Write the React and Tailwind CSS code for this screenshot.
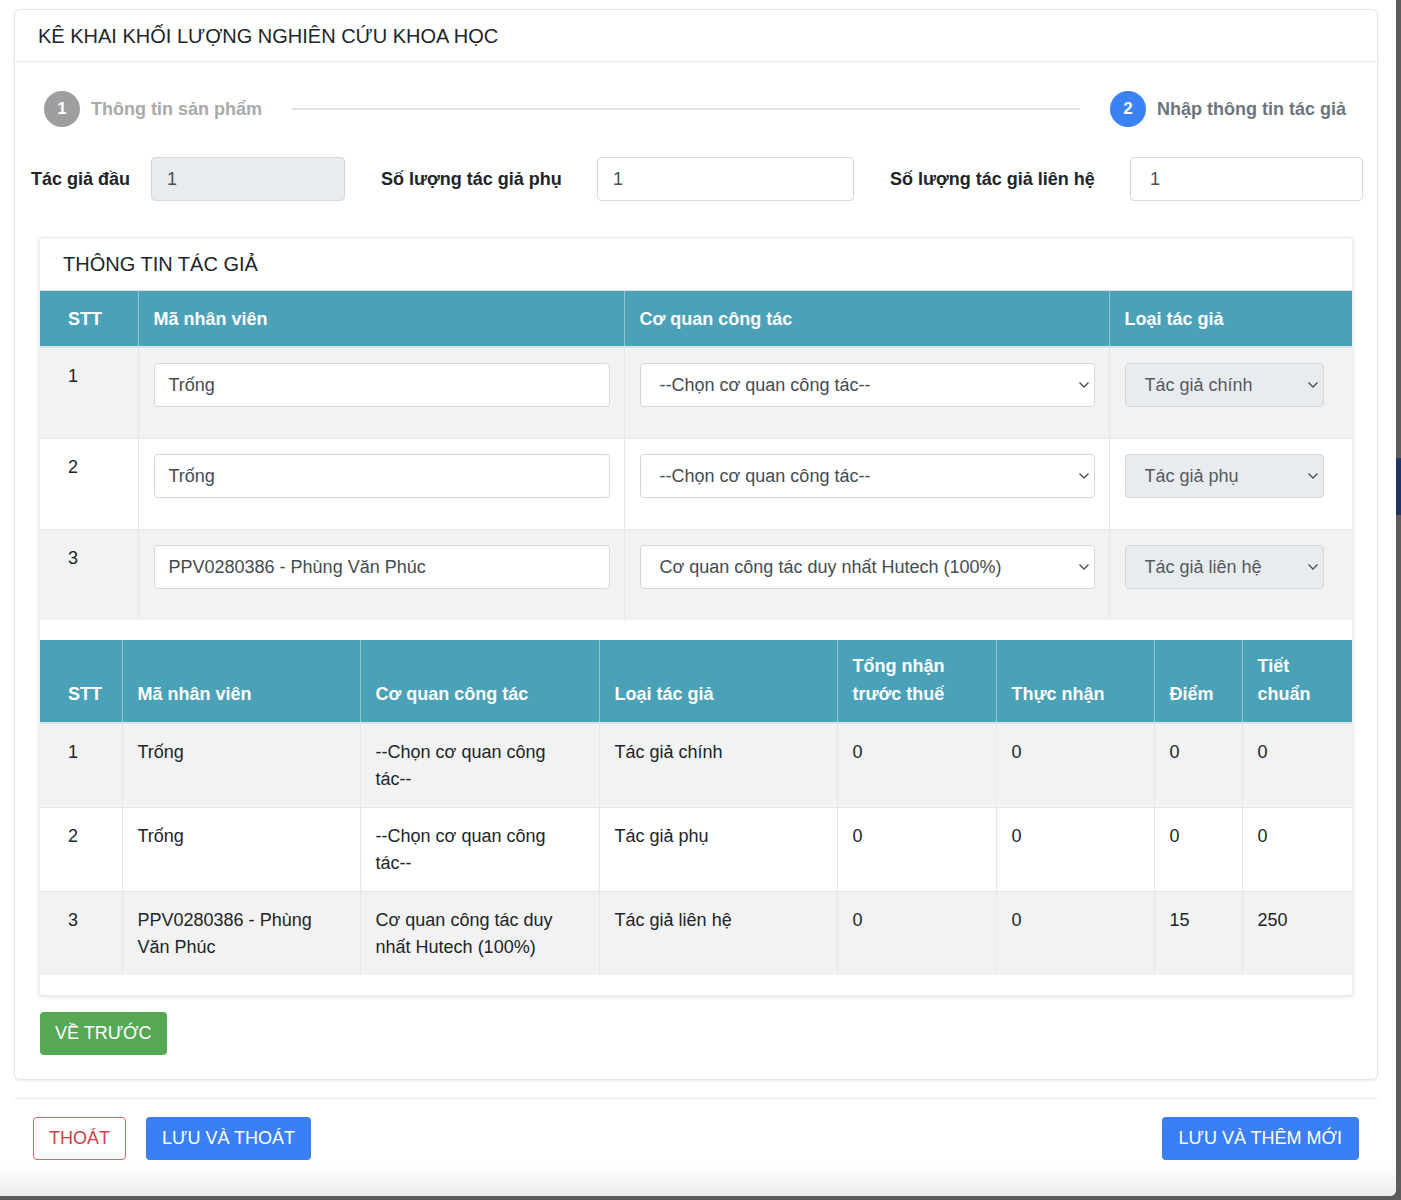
import React from "react";

const authors = [
  {
    stt: 1,
    ma: "Trống",
    coQuan: "--Chọn cơ quan công tác--",
    loai: "Tác giả chính",
    tong: "0",
    thuc: "0",
    diem: "0",
    tiet: "0",
  },
  {
    stt: 2,
    ma: "Trống",
    coQuan: "--Chọn cơ quan công tác--",
    loai: "Tác giả phụ",
    tong: "0",
    thuc: "0",
    diem: "0",
    tiet: "0",
  },
  {
    stt: 3,
    ma: "PPV0280386 - Phùng Văn Phúc",
    coQuan: "Cơ quan công tác duy nhất Hutech (100%)",
    loai: "Tác giả liên hệ",
    tong: "0",
    thuc: "0",
    diem: "15",
    tiet: "250",
  },
];

function Chevron() {
  return (
    <svg width="12" height="8" viewBox="0 0 12 8" fill="none" stroke="#4a4a4a" strokeWidth="1.3">
      <path d="M1.5 1.5l4.5 4.5 4.5-4.5" />
    </svg>
  );
}

// keep words like "tác--" whole when the cell wraps
function Words({ text }) {
  const parts = text.split(" ");
  return parts.map((w, i) => (
    <React.Fragment key={i}>
      <span className="whitespace-nowrap">{w}</span>
      {i < parts.length - 1 ? " " : ""}
    </React.Fragment>
  ));
}

function FakeSelect({ value, disabled }) {
  return (
    <div
      className={`h-[44px] flex items-center justify-between rounded-[4px] border border-[#d4d8dc] pl-[19px] pr-[4px] text-[18px] ${
        disabled ? "bg-[#e9ecef] text-[#555a5f]" : "bg-white text-[#444b52]"
      }`}
    >
      <span className="truncate">{value}</span>
      <Chevron />
    </div>
  );
}

function Step({ num, label, active }) {
  return (
    <div className="flex items-center gap-[11px] shrink-0">
      <div
        className={`w-[36px] h-[36px] rounded-full flex items-center justify-center text-white font-bold text-[17px] ${
          active ? "bg-[#3b82f6]" : "bg-[#9e9e9e]"
        }`}
      >
        {num}
      </div>
      <span className={`font-bold text-[18px] ${active ? "text-[#6c757d]" : "text-[#a9a9a9]"}`}>{label}</span>
    </div>
  );
}

export default function App() {
  const th = "text-left font-bold text-white text-[18px] leading-[28px]";
  return (
    <div
      className="w-[1401px] h-[1200px] bg-[#5c5c5c] flex text-[#212529]"
      style={{ fontFamily: '"Liberation Sans", Arial, sans-serif' }}
    >
      <div className="w-[1396px] h-[1196px] bg-white rounded-br-[6px] flex flex-col">
        {/* Main card */}
        <div className="mt-[9px] ml-[14px] mr-[18px] border border-[#e4e4e4] rounded-[6px] shadow-[0_1px_3px_rgba(0,0,0,0.08)] bg-white">
          <div className="h-[52px] flex items-center px-[23px] border-b border-[#ececec] text-[20px]">
            KÊ KHAI KHỐI LƯỢNG NGHIÊN CỨU KHOA HỌC
          </div>

          {/* Stepper */}
          <div className="flex items-center mt-[29px] pl-[29px] pr-[31px]">
            <Step num="1" label="Thông tin sản phẩm" />
            <div className="flex-1 h-[2px] bg-[#e2e2e2] mx-[30px]" />
            <Step num="2" label="Nhập thông tin tác giả" active />
          </div>

          {/* Counts */}
          <div className="flex items-center mt-[30px] pl-[16px]">
            <div className="flex items-center">
              <span className="w-[120px] font-bold text-[18px]">Tác giả đầu</span>
              <div className="w-[194px] h-[44px] rounded-[4px] border border-[#d4d8dc] bg-[#e9ecef] flex items-center pl-[15px] text-[18px] text-[#495057]">
                1
              </div>
            </div>
            <div className="flex items-center ml-[36px]">
              <span className="w-[216px] font-bold text-[18px]">Số lượng tác giả phụ</span>
              <div className="w-[257px] h-[44px] rounded-[4px] border border-[#d4d8dc] bg-white flex items-center pl-[15px] text-[18px] text-[#495057]">
                1
              </div>
            </div>
            <div className="flex items-center ml-[36px]">
              <span className="w-[240px] font-bold text-[18px]">Số lượng tác giả liên hệ</span>
              <div className="w-[233px] h-[44px] rounded-[4px] border border-[#d4d8dc] bg-white flex items-center pl-[19px] text-[18px] text-[#495057]">
                1
              </div>
            </div>
          </div>

          {/* Author card */}
          <div className="mt-[36px] mx-[24px] rounded-[4px] border border-[#ececec] shadow-[0_1px_4px_rgba(0,0,0,0.12)] bg-white pb-[20px]">
            <div className="h-[53px] flex items-center pl-[23px] text-[20px] border-b border-[#e0e0e0]">
              THÔNG TIN TÁC GIẢ
            </div>

            <table className="w-full table-fixed">
              <colgroup>
                <col className="w-[98px]" />
                <col className="w-[486px]" />
                <col className="w-[485px]" />
                <col />
              </colgroup>
              <thead>
                <tr className="bg-[#4ba1b7] border-b-2 border-[#dee2e6]">
                  <th className={`${th} pt-[14px] pb-[13px] pl-[28px]`}>STT</th>
                  <th className={`${th} pt-[14px] pb-[13px] pl-[15px] border-l border-[#8fc5d3]`}>Mã nhân viên</th>
                  <th className={`${th} pt-[14px] pb-[13px] pl-[15px] border-l border-[#8fc5d3]`}>Cơ quan công tác</th>
                  <th className={`${th} pt-[14px] pb-[13px] pl-[15px] border-l border-[#8fc5d3]`}>Loại tác giả</th>
                </tr>
              </thead>
              <tbody>
                {authors.map((a, i) => (
                  <tr
                    key={a.stt}
                    className={`${i % 2 === 0 ? "bg-[#f2f2f2]" : "bg-white"} ${i > 0 ? "border-t border-[#e4e4e4]" : ""}`}
                  >
                    <td className="align-top pt-[16px] pl-[28px] text-[18px] leading-[24px]">{a.stt}</td>
                    <td className="align-top pt-[15px] pb-[31px] pl-[15px] pr-[14px] border-l border-[#e8e8e8]">
                      <div className="h-[44px] rounded-[4px] border border-[#d4d8dc] bg-white flex items-center pl-[14px] text-[18px] text-[#444b52]">
                        {a.ma}
                      </div>
                    </td>
                    <td className="align-top pt-[15px] pl-[15px] pr-[14px] border-l border-[#e8e8e8]">
                      <FakeSelect value={a.coQuan} />
                    </td>
                    <td className="align-top pt-[15px] pl-[15px] pr-[28px] border-l border-[#e8e8e8]">
                      <FakeSelect value={a.loai} disabled />
                    </td>
                  </tr>
                ))}
              </tbody>
            </table>

            <div className="h-[20px]" />

            <table className="w-full table-fixed">
              <colgroup>
                <col className="w-[82px]" />
                <col className="w-[238px]" />
                <col className="w-[239px]" />
                <col className="w-[238px]" />
                <col className="w-[159px]" />
                <col className="w-[158px]" />
                <col className="w-[88px]" />
                <col />
              </colgroup>
              <thead>
                <tr className="bg-[#4ba1b7] border-b-2 border-[#dee2e6]">
                  <th className={`${th} align-bottom pt-[12px] pb-[14px] pl-[28px]`}>STT</th>
                  {["Mã nhân viên", "Cơ quan công tác", "Loại tác giả", "Tổng nhận trước thuế", "Thực nhận", "Điểm", "Tiết chuẩn"].map(
                    (h) => (
                      <th key={h} className={`${th} align-bottom pt-[12px] pb-[14px] pl-[15px] pr-[12px] border-l border-[#8fc5d3]`}>
                        {h}
                      </th>
                    )
                  )}
                </tr>
              </thead>
              <tbody>
                {authors.map((a, i) => (
                  <tr
                    key={a.stt}
                    className={`${i % 2 === 0 ? "bg-[#f2f2f2]" : "bg-white"} ${i > 0 ? "border-t border-[#e4e4e4]" : ""} text-[18px] leading-[27px]`}
                  >
                    <td className="align-top pt-[15px] pb-[14px] pl-[28px]">{a.stt}</td>
                    {[a.ma, a.coQuan, a.loai, a.tong, a.thuc, a.diem, a.tiet].map((v, j) => (
                      <td key={j} className="align-top pt-[15px] pb-[14px] pl-[15px] pr-[14px] border-l border-[#e8e8e8]">
                        <Words text={v} />
                      </td>
                    ))}
                  </tr>
                ))}
              </tbody>
            </table>
          </div>

          <div className="pl-[25px] pt-[16px] pb-[24px]">
            <button className="h-[43px] px-[15px] rounded-[4px] bg-[#56a854] text-white text-[18px]">VỀ TRƯỚC</button>
          </div>
        </div>

        {/* Footer */}
        <div className="ml-[14px] mr-[18px] mt-[18px] border-t border-[#ececec]" />
        <div className="flex items-center justify-between pl-[33px] pr-[37px] mt-[18px]">
          <div className="flex items-center gap-[20px]">
            <button className="h-[43px] px-[15px] rounded-[4px] border border-[#d9626a] text-[#d0414b] text-[18px] bg-white">
              THOÁT
            </button>
            <button className="h-[43px] px-[16px] rounded-[4px] bg-[#3a7ff6] text-white text-[18px]">LƯU VÀ THOÁT</button>
          </div>
          <button className="h-[43px] px-[17px] rounded-[4px] bg-[#3a7ff6] text-white text-[18px]">LƯU VÀ THÊM MỚI</button>
        </div>
        <div className="flex-1 mt-[5px] bg-gradient-to-b from-white to-[#ececec] rounded-br-[6px]" />
      </div>
      <div className="w-[5px] flex flex-col">
        <div className="h-[458px]" />
        <div className="h-[57px] bg-[#1e3566]" />
      </div>
    </div>
  );
}
